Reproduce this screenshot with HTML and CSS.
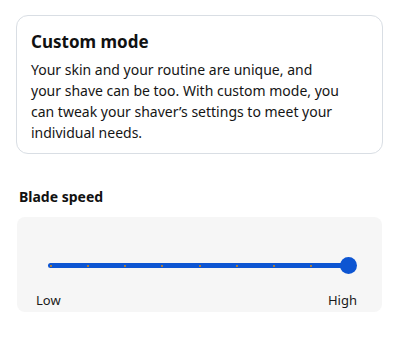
FILE: index.html
```html
<!DOCTYPE html>
<html lang="en">
<head>
<meta charset="utf-8">
<link rel="stylesheet" href="styles.css">
</head>
<body>
<section class="card">
  <h2 class="card-title">Custom mode</h2>
  <p class="card-text">Your skin and your routine are unique, and your shave can be too. With custom mode, you can tweak your shaver’s settings to meet your individual needs.</p>
</section>
<h3 class="section-title">Blade speed</h3>
<div class="panel">
  <div class="slider">
    <div class="track"></div>
    <div class="ticks">
      <span class="tick"></span><span class="tick"></span><span class="tick"></span><span class="tick"></span><span class="tick"></span><span class="tick"></span><span class="tick"></span><span class="tick"></span><span class="tick hidden"></span>
    </div>
    <div class="thumb"></div>
  </div>
  <div class="labels">
    <span>Low</span>
    <span>High</span>
  </div>
</div>
</body>
</html>
```
FILE: styles.css
```css
* { box-sizing: border-box; }
html, body { margin: 0; padding: 0; background: #ffffff; }
body {
  font-family: "Noto Sans", "Open Sans", sans-serif;
  color: #111111;
  width: 400px;
  height: 338px;
  overflow: hidden;
}
.card {
  margin: 15px 17px 0 16px;
  border: 1px solid #d9dee4;
  border-radius: 12px;
  padding: 14px 38px 10px 14px;
}
.card-title {
  margin: 0;
  font-size: 17px;
  line-height: 24px;
  font-weight: 700;
}
.card-text {
  margin: 5px 0 0 0;
  font-size: 14px;
  line-height: 21px;
  font-weight: 400;
  color: #151515;
}
.section-title {
  margin: 33px 0 0 19px;
  font-size: 14px;
  line-height: 20px;
  font-weight: 700;
}
.panel {
  margin: 10px 18px 0 17px;
  height: 95px;
  background: #f6f6f6;
  border-radius: 8px;
  padding: 40px 25px 0 19px;
}
.slider {
  position: relative;
  height: 17px;
  margin: 0 0 0 12px;
}
.track {
  position: absolute;
  left: 0;
  right: 8px;
  top: 6px;
  height: 5px;
  border-radius: 3px;
  background: #0d55d2;
}
.ticks {
  position: absolute;
  left: 1.5px;
  right: 7.5px;
  top: 7.5px;
  display: flex;
  justify-content: space-between;
}
.tick {
  width: 2px;
  height: 2px;
  background: #a77a3c;
}
.tick.hidden { visibility: hidden; }
.thumb {
  position: absolute;
  right: 0;
  top: 0;
  width: 17px;
  height: 17px;
  border-radius: 50%;
  background: #0d55d2;
}
.labels {
  display: flex;
  justify-content: space-between;
  margin-top: 17px;
  font-size: 13px;
  line-height: 18px;
  color: #1a1a1a;
}
```
